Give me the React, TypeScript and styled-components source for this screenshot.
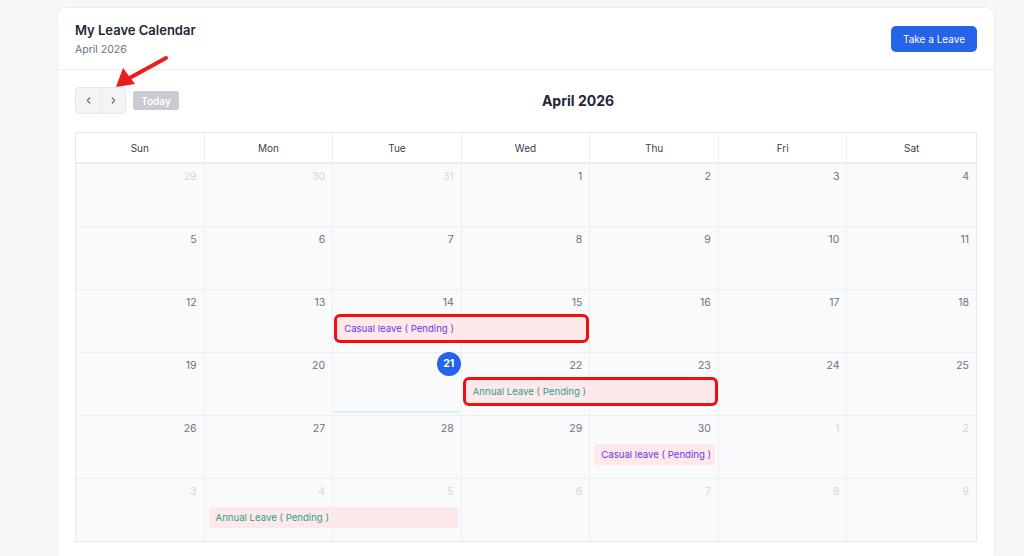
import React from "react";
import styled, { createGlobalStyle } from "styled-components";

const GlobalStyle = createGlobalStyle`
  html, body { margin: 0; padding: 0; overflow: hidden; }
  body {
    background: #f6f7f9;
    font-family: Inter, "Noto Sans", "Liberation Sans", sans-serif;
    color: #1f2937;
  }
  * { box-sizing: border-box; }
`;

const Page = styled.div`
  position: relative;
  width: 1024px;
  height: 556px;
  padding: 7px 0 0 57px;
`;

const Card = styled.div`
  width: 938px;
  background: #ffffff;
  border: 1px solid #eceef1;
  border-radius: 8px;
`;

const CardHeader = styled.div`
  display: flex;
  align-items: center;
  justify-content: space-between;
  padding: 12px 17px 11px 17px;
  border-bottom: 1px solid #eef0f3;
`;

const TitleBlock = styled.div`
  display: flex;
  flex-direction: column;
  gap: 2px;
`;

const Title = styled.div`
  font-size: 13px;
  line-height: 20px;
  font-weight: 600;
  color: #1f2937;
`;

const Subtitle = styled.div`
  font-size: 10.5px;
  line-height: 16px;
  color: #6b7280;
`;

const PrimaryButton = styled.button`
  height: 26px;
  width: 86px;
  padding: 0;
  border: none;
  border-radius: 5px;
  background: #2563eb;
  color: #ffffff;
  font-family: inherit;
  font-size: 10px;
  cursor: pointer;
`;

const CardBody = styled.div`
  padding: 17px 17px 18px 17px;
`;

const Toolbar = styled.div`
  display: flex;
  align-items: center;
  justify-content: space-between;
  height: 27px;
  margin-bottom: 18px;
`;

const ToolbarChunk = styled.div`
  display: flex;
  align-items: center;
  gap: 6px;
`;

const NavGroup = styled.div`
  display: flex;
`;

const NavButton = styled.button<{ $side: "left" | "right" }>`
  width: 26px;
  height: 27px;
  display: flex;
  align-items: center;
  justify-content: center;
  background: #f3f4f6;
  border: 1px solid #e5e7eb;
  border-radius: ${(p) => (p.$side === "left" ? "4px 0 0 4px" : "0 4px 4px 0")};
  margin-left: ${(p) => (p.$side === "right" ? "-1px" : "0")};
  color: #4b5563;
  padding: 0;
  cursor: pointer;
`;

const TodayButton = styled.button`
  height: 19px;
  width: 46px;
  margin-left: 1px;
  border: none;
  border-radius: 3px;
  background: #c8cbd1;
  color: #ffffff;
  font-family: inherit;
  font-size: 10px;
  font-weight: 600;
  padding: 0;
`;

const CalTitle = styled.h2`
  margin: 0;
  font-size: 14px;
  font-weight: 700;
  color: #1f2937;
`;

const Grid = styled.div`
  border: 1px solid #e8eaee;
`;

const HeadRow = styled.div`
  display: grid;
  grid-template-columns: repeat(7, 1fr);
  height: 31px;
  background: #ffffff;
  border-bottom: 2px solid #eceef1;
`;

const HeadCell = styled.div<{ $last?: boolean }>`
  display: flex;
  align-items: center;
  justify-content: center;
  font-size: 10px;
  color: #374151;
  border-right: ${(p) => (p.$last ? "none" : "1px solid #eceef1")};
`;

const WeekRow = styled.div<{ $last?: boolean }>`
  display: grid;
  grid-template-columns: repeat(7, 1fr);
  grid-template-rows: 62px;
  border-bottom: ${(p) => (p.$last ? "none" : "1px solid #eceef1")};
  background: #f9fafb;
`;

const DayCell = styled.div<{ $col: number }>`
  grid-row: 1;
  grid-column: ${(p) => p.$col};
  display: flex;
  flex-direction: column;
  align-items: flex-end;
  justify-content: space-between;
  border-right: ${(p) => (p.$col === 7 ? "none" : "1px solid #eceef1")};
`;

const TodayLine = styled.div`
  align-self: stretch;
  height: 2px;
  margin: 0 1px 2px 1px;
  background: #e1ecfa;
`;

const DayNumber = styled.span<{ $muted?: boolean; $today?: boolean }>`
  font-size: 10.5px;
  line-height: 14px;
  ${(p) =>
    p.$today
      ? `
    width: 24px;
    height: 24px;
    margin: -1px 0 0 0;
    border-radius: 50%;
    background: #2563eb;
    color: #ffffff;
    font-weight: 700;
    display: flex;
    align-items: center;
    justify-content: center;
  `
      : `
    padding: 6px 7px 0 0;
    color: ${p.$muted ? "#d3d6db" : "#6b7280"};
  `}
`;

const EventBar = styled.div<{ $kind: "casual" | "annual"; $flag?: boolean }>`
  grid-row: 1;
  align-self: start;
  z-index: 1;
  margin: ${(p) => (p.$flag ? "27px 4px 0 4px" : "28px 4px 0 4px")};
  height: ${(p) => (p.$flag ? "23px" : "21px")};
  display: flex;
  align-items: center;
  padding: 0 7px;
  border-radius: 3px;
  background: #fde8ea;
  font-size: 9.6px;
  white-space: nowrap;
  overflow: hidden;
  color: ${(p) => (p.$kind === "casual" ? "#6a35f0" : "#2e9e8b")};
  outline: ${(p) => (p.$flag ? "3.5px solid #f20e0e" : "none")};
  outline-offset: 0;
`;

const ArrowLayer = styled.svg`
  position: absolute;
  left: 0;
  top: 0;
  pointer-events: none;
`;

type Day = { n: number; muted?: boolean; today?: boolean };
type Ev = { start: number; span: number; kind: "casual" | "annual"; label: string; flag?: boolean };

const weeks: { days: Day[]; events: Ev[] }[] = [
  {
    days: [{ n: 29, muted: true }, { n: 30, muted: true }, { n: 31, muted: true }, { n: 1 }, { n: 2 }, { n: 3 }, { n: 4 }],
    events: [],
  },
  { days: [5, 6, 7, 8, 9, 10, 11].map((n) => ({ n })), events: [] },
  {
    days: [12, 13, 14, 15, 16, 17, 18].map((n) => ({ n })),
    events: [{ start: 3, span: 2, kind: "casual", label: "Casual leave ( Pending )", flag: true }],
  },
  {
    days: [{ n: 19 }, { n: 20 }, { n: 21, today: true }, { n: 22 }, { n: 23 }, { n: 24 }, { n: 25 }],
    events: [{ start: 4, span: 2, kind: "annual", label: "Annual Leave ( Pending )", flag: true }],
  },
  {
    days: [{ n: 26 }, { n: 27 }, { n: 28 }, { n: 29 }, { n: 30 }, { n: 1, muted: true }, { n: 2, muted: true }],
    events: [{ start: 5, span: 1, kind: "casual", label: "Casual leave ( Pending )" }],
  },
  {
    days: [3, 4, 5, 6, 7, 8, 9].map((n) => ({ n, muted: true })),
    events: [{ start: 2, span: 2, kind: "annual", label: "Annual Leave ( Pending )" }],
  },
];

const dayNames = ["Sun", "Mon", "Tue", "Wed", "Thu", "Fri", "Sat"];

const Chevron = ({ dir }: { dir: "left" | "right" }) => (
  <svg width="5" height="7" viewBox="0 0 5 7">
    <path
      d={dir === "left" ? "M3.8 0.8 L1.3 3.5 L3.8 6.2" : "M1.2 0.8 L3.7 3.5 L1.2 6.2"}
      fill="none"
      stroke="#4b5563"
      strokeWidth="1.1"
      strokeLinecap="round"
      strokeLinejoin="round"
    />
  </svg>
);

export default function App() {
  return (
    <>
      <GlobalStyle />
      <Page>
        <Card>
          <CardHeader>
            <TitleBlock>
              <Title>My Leave Calendar</Title>
              <Subtitle>April 2026</Subtitle>
            </TitleBlock>
            <PrimaryButton>Take a Leave</PrimaryButton>
          </CardHeader>
          <CardBody>
            <Toolbar>
              <ToolbarChunk>
                <NavGroup>
                  <NavButton $side="left">
                    <Chevron dir="left" />
                  </NavButton>
                  <NavButton $side="right">
                    <Chevron dir="right" />
                  </NavButton>
                </NavGroup>
                <TodayButton>Today</TodayButton>
              </ToolbarChunk>
              <CalTitle>April 2026</CalTitle>
              <ToolbarChunk />
            </Toolbar>
            <Grid>
              <HeadRow>
                {dayNames.map((d, i) => (
                  <HeadCell key={d} $last={i === 6}>
                    {d}
                  </HeadCell>
                ))}
              </HeadRow>
              {weeks.map((w, wi) => (
                <WeekRow key={wi} $last={wi === weeks.length - 1}>
                  {w.days.map((d, di) => (
                    <DayCell key={di} $col={di + 1}>
                      <DayNumber $muted={d.muted} $today={d.today}>
                        {d.n}
                      </DayNumber>
                      {d.today && <TodayLine />}
                    </DayCell>
                  ))}
                  {w.events.map((e, ei) => (
                    <EventBar
                      key={ei}
                      $kind={e.kind}
                      $flag={e.flag}
                      style={{ gridColumn: `${e.start} / span ${e.span}` }}
                    >
                      {e.label}
                    </EventBar>
                  ))}
                </WeekRow>
              ))}
            </Grid>
          </CardBody>
        </Card>
        <ArrowLayer width="1024" height="556" viewBox="0 0 1024 556">
          <line x1="166" y1="58" x2="126" y2="80" stroke="#ee1c1c" strokeWidth="4" strokeLinecap="round" />
          <polygon points="116,87 123,68 135,84" fill="#ee1c1c" />
        </ArrowLayer>
      </Page>
    </>
  );
}
